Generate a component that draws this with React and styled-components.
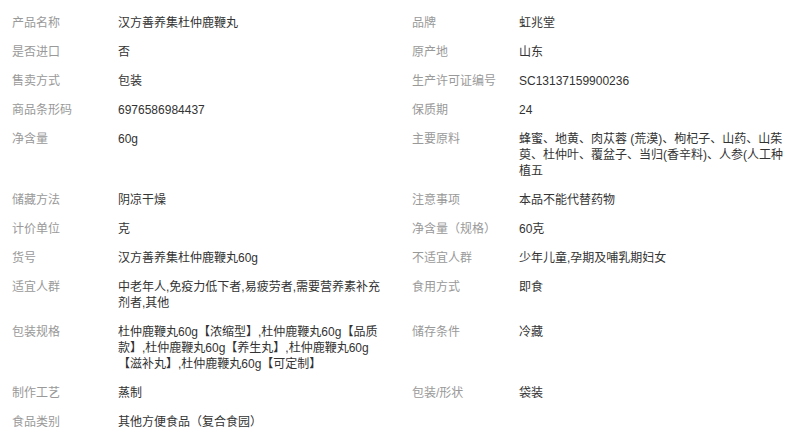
import styled, { createGlobalStyle } from "styled-components";

const GlobalStyle = createGlobalStyle`
  body {
    margin: 0;
    background: #fff;
    font-family: "Liberation Sans", Arial, "Noto Sans CJK SC", sans-serif;
  }
`;

const Table = styled.div`
  width: 808px;
  padding: 8px 0 0 12px;
  box-sizing: border-box;
`;

const Row = styled.div`
  display: grid;
  grid-template-columns: 106px 294px 107px 1fr;
  font-size: 12px;
  line-height: 16px;
`;

const Label = styled.div`
  color: #999;
  padding: 7px 0 6px;
  white-space: nowrap;
`;

const Value = styled.div`
  color: #333;
  padding: 7px 0 6px;
  max-width: 268px;
  word-break: break-all;
`;

const rows = [
  ["产品名称", "汉方善养集杜仲鹿鞭丸", "品牌", "虹兆堂"],
  ["是否进口", "否", "原产地", "山东"],
  ["售卖方式", "包装", "生产许可证编号", "SC13137159900236"],
  ["商品条形码", "6976586984437", "保质期", "24"],
  [
    "净含量",
    "60g",
    "主要原料",
    "蜂蜜、地黄、肉苁蓉 (荒漠)、枸杞子、山药、山茱萸、杜仲叶、覆盆子、当归(香辛料)、人参(人工种植五",
  ],
  ["储藏方法", "阴凉干燥", "注意事项", "本品不能代替药物"],
  ["计价单位", "克", "净含量（规格）", "60克"],
  ["货号", "汉方善养集杜仲鹿鞭丸60g", "不适宜人群", "少年儿童,孕期及哺乳期妇女"],
  [
    "适宜人群",
    "中老年人,免疫力低下者,易疲劳者,需要营养素补充剂者,其他",
    "食用方式",
    "即食",
  ],
  [
    "包装规格",
    "杜仲鹿鞭丸60g【浓缩型】,杜仲鹿鞭丸60g【品质款】,杜仲鹿鞭丸60g【养生丸】,杜仲鹿鞭丸60g【滋补丸】,杜仲鹿鞭丸60g【可定制】",
    "储存条件",
    "冷藏",
  ],
  ["制作工艺", "蒸制", "包装/形状", "袋装"],
  ["食品类别", "其他方便食品（复合食园）", "", ""],
];

const App = () => (
  <>
    <GlobalStyle />
    <Table>
      {rows.map((r, i) => (
        <Row key={i}>
          <Label>{r[0]}</Label>
          <Value>{r[1]}</Value>
          <Label>{r[2]}</Label>
          <Value>{r[3]}</Value>
        </Row>
      ))}
    </Table>
  </>
);

export default App;
